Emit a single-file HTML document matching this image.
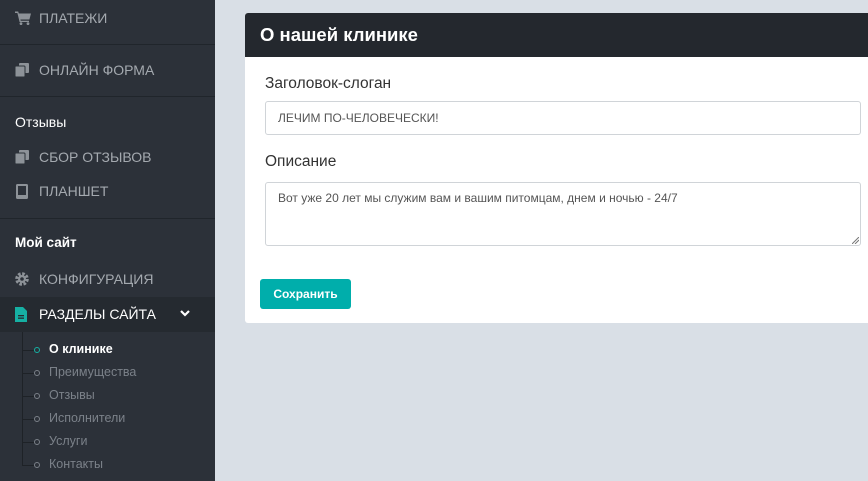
<!DOCTYPE html>
<html><head><meta charset="utf-8"><style>
*{margin:0;padding:0;box-sizing:border-box}
body{width:868px;height:481px;overflow:hidden;background:#d9dfe6;font-family:"Liberation Sans","DejaVu Sans",sans-serif;position:relative}
#sb{position:absolute;left:0;top:0;width:215px;height:481px;background:#2c3139}
.it{position:absolute;left:15px;font-size:14px;color:#a4a9af;height:20px;line-height:20px}
.it svg{position:absolute;left:0;top:3px}
.it span{position:absolute;left:24px;white-space:nowrap}
.hd{position:absolute;left:15px;color:#fff;font-size:14px}
.dv{position:absolute;left:0;width:215px;height:1px;background:#20252b}
.sub{position:absolute;left:49px;font-size:12.5px;color:#7b8189}
.dot{position:absolute;left:34px;width:6px;height:6px;border:1.3px solid #7b8189;border-radius:50%}
.tk{position:absolute;left:22px;width:12px;height:1px;background:#1e2227}
#card{position:absolute;left:245px;top:13px;width:623px;height:310px;background:#fff;border-radius:3px 0 0 3px}
#ch{height:44px;background:#24282e;color:#fff;font-size:18.5px;font-weight:bold;padding-left:15px;line-height:44px;border-radius:3px 0 0 0}
.lb{position:absolute;left:20px;font-size:15.5px;color:#333}
.in{position:absolute;left:20px;width:596px;border:1px solid #d0d4d8;border-radius:3px;font-size:12px;color:#555;padding:0 12px}
#btn{position:absolute;left:15px;top:266px;width:91px;height:30px;background:#00aeab;border-radius:3px;color:#fff;font-size:12px;font-weight:bold;text-align:center;line-height:30px}
</style></head><body>
<div id="sb">
<div class="it" style="top:8px"><svg width="16" height="14" viewBox="0 0 16 14"><path d="M0 0.5h3.2l0.6 2H16l-1.6 6H5.4l0.3 1.3H14V11H4.6L2.4 2H0z" fill="#8d9298"/><circle cx="6" cy="12.6" r="1.4" fill="#8d9298"/><circle cx="13" cy="12.6" r="1.4" fill="#8d9298"/></svg><span>ПЛАТЕЖИ</span></div>
<div class="dv" style="top:44px"></div>
<div class="it" style="top:60px"><svg width="15" height="14"><rect x="4" y="0" width="10" height="10" rx="1" fill="#8d9298"/><rect x="0" y="3" width="10" height="11" rx="1" fill="#8d9298" stroke="#2c3139"/></svg><span>ОНЛАЙН ФОРМА</span></div>
<div class="dv" style="top:96px"></div>
<div class="hd" style="top:114px">Отзывы</div>
<div class="it" style="top:147px"><svg width="15" height="14"><rect x="4" y="0" width="10" height="10" rx="1" fill="#8d9298"/><rect x="0" y="3" width="10" height="11" rx="1" fill="#8d9298" stroke="#2c3139"/></svg><span>СБОР ОТЗЫВОВ</span></div>
<div class="it" style="top:181px"><svg width="14" height="15"><rect x="1" y="0" width="12" height="15" rx="1.5" fill="#8d9298"/><rect x="3" y="2" width="8" height="9" fill="#2c3139"/></svg><span>ПЛАНШЕТ</span></div>
<div class="dv" style="top:218px"></div>
<div class="hd" style="top:235px;font-weight:bold;font-size:13.5px">Мой сайт</div>
<div class="it" style="top:269px"><svg width="14" height="14" viewBox="0 0 14 14"><circle cx="7" cy="7" r="5.3" fill="none" stroke="#8d9298" stroke-width="3" stroke-dasharray="2.6 1.56"/><circle cx="7" cy="7" r="4" fill="#8d9298"/><circle cx="7" cy="7" r="1.8" fill="#2c3139"/></svg><span>КОНФИГУРАЦИЯ</span></div>
<div style="position:absolute;left:0;top:297px;width:215px;height:35px;background:#252a30"></div>
<div class="it" style="top:304px;color:#fff"><svg width="12" height="15"><path d="M0 0h8l4 4v11H0z" fill="#16b0a3"/><rect x="3" y="8" width="6" height="1.3" fill="#252a30"/><rect x="3" y="10.5" width="6" height="1.3" fill="#252a30"/></svg><span>РАЗДЕЛЫ САЙТА</span></div>
<svg style="position:absolute;left:180px;top:310px" width="10" height="8"><path d="M1 1l4 4 4-4" stroke="#fff" stroke-width="2.2" fill="none"/></svg>
<div style="position:absolute;left:22px;top:332px;width:1px;height:134px;background:#1e2227"></div>
<div class="tk" style="top:350px"></div><div class="dot" style="top:347px;border-color:#16b0a3"></div><div class="sub" style="top:342px;color:#fff;font-weight:bold">О клинике</div>
<div class="tk" style="top:373px"></div><div class="dot" style="top:370px"></div><div class="sub" style="top:365px">Преимущества</div>
<div class="tk" style="top:396px"></div><div class="dot" style="top:393px"></div><div class="sub" style="top:388px">Отзывы</div>
<div class="tk" style="top:419px"></div><div class="dot" style="top:416px"></div><div class="sub" style="top:411px">Исполнители</div>
<div class="tk" style="top:442px"></div><div class="dot" style="top:439px"></div><div class="sub" style="top:434px">Услуги</div>
<div class="tk" style="top:465px"></div><div class="dot" style="top:462px"></div><div class="sub" style="top:457px">Контакты</div>
</div>
<div id="card">
<div id="ch">О нашей клинике</div>
<div class="lb" style="top:62px">Заголовок-слоган</div>
<div class="in" style="top:88px;height:34px;line-height:33px">ЛЕЧИМ ПО-ЧЕЛОВЕЧЕСКИ!</div>
<div class="lb" style="top:140px">Описание</div>
<div class="in" style="top:169px;height:64px;padding-top:8px">Вот уже 20 лет мы служим вам и вашим питомцам, днем и ночью - 24/7
<svg style="position:absolute;right:1px;bottom:1px" width="7" height="7"><path d="M0 7L7 0M3 7L7 3" stroke="#777"/></svg></div>
<div id="btn">Сохранить</div>
</div>
</body></html>
